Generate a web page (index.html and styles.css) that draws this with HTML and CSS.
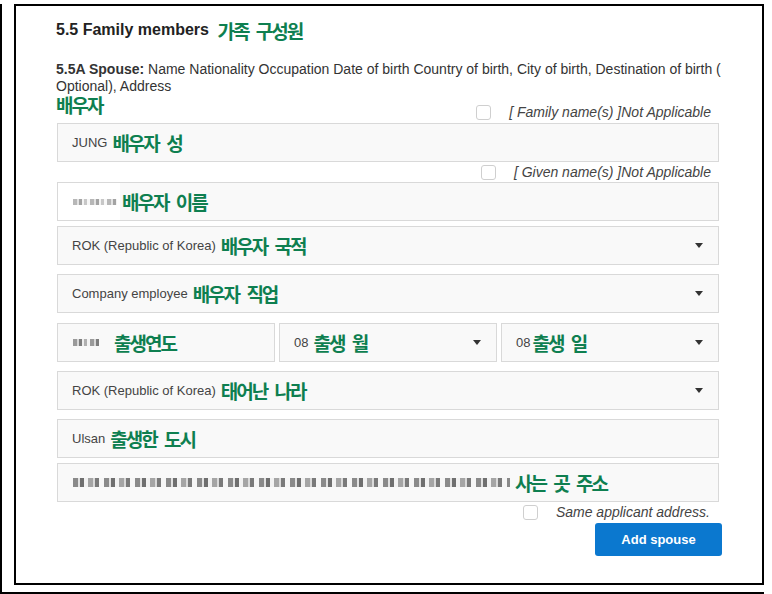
FILE: index.html
```html
<!DOCTYPE html>
<html lang="ko">
<head>
<meta charset="utf-8">
<title>5.5 Family members</title>
<link rel="stylesheet" href="styles.css">
</head>
<body>
<div class="outer">
  <div class="frame">
    <h2 class="title">5.5 Family members <span class="ko">가족 구성원</span></h2>
    <p class="desc"><b>5.5A Spouse:</b> Name Nationality Occupation Date of birth Country of birth, City of birth, Destination of birth ( Optional), Address</p>

    <div class="label-row">
      <span class="ko">배우자</span>
      <label class="check"><span class="box"></span><span>[ Family name(s) ]Not Applicable</span></label>
    </div>

    <div class="field gap-3"><span>JUNG</span><span class="ko">배우자 성</span></div>

    <div class="check-row gap-3">
      <label class="check"><span class="box"></span><span>[ Given name(s) ]Not Applicable</span></label>
    </div>

    <div class="field gap-2 masked"><span class="blur blur-name"></span><span class="ko">배우자 이름</span></div>

    <div class="field select gap-5"><span>ROK (Republic of Korea)</span><span class="ko">배우자 국적</span><span class="caret"></span></div>

    <div class="field select gap-9"><span>Company employee</span><span class="ko">배우자 직업</span><span class="caret"></span></div>

    <div class="date-row gap-10">
      <div class="field"><span class="blur blur-year"></span><span class="ko ko-year">출생연도</span></div>
      <div class="field select"><span>08</span><span class="ko">출생 월</span><span class="caret"></span></div>
      <div class="field select"><span>08</span><span class="ko ko-tight">출생 일</span><span class="caret"></span></div>
    </div>

    <div class="field select gap-9"><span>ROK (Republic of Korea)</span><span class="ko">태어난 나라</span><span class="caret"></span></div>

    <div class="field gap-9"><span>Ulsan</span><span class="ko">출생한 도시</span></div>

    <div class="field gap-5"><span class="blur blur-addr"></span><span class="ko">사는 곳 주소</span></div>

    <div class="check-row gap-3 check-row-addr">
      <label class="check"><span class="box"></span><span>Same applicant address.</span></label>
    </div>

    <div class="button-row">
      <button class="btn" type="button">Add spouse</button>
    </div>
  </div>
</div>
</body>
</html>
```

FILE: styles.css
```css
html, body {
  margin: 0;
  padding: 0;
  background: #fff;
}

body {
  width: 772px;
  height: 594px;
  overflow: hidden;
  font-family: "Liberation Sans", Arial, "Noto Sans CJK KR", sans-serif;
  color: #333;
}

.outer {
  box-sizing: border-box;
  margin-top: 4px;
  width: 764px;
  height: 590px;
  border-left: 2px solid #000;
  border-bottom: 2px solid #000;
}

.frame {
  box-sizing: border-box;
  margin-left: 12px;
  width: 750px;
  height: 581px;
  border: 2px solid #000;
  padding: 14px 0 0 40px;
}

.ko {
  font-family: "Noto Sans CJK KR", sans-serif;
  font-weight: 700;
  font-size: 19px;
  letter-spacing: -2px;
  word-spacing: 4px;
  color: #0e7f50;
  line-height: 1;
}

.title {
  margin: 0;
  font-size: 16px;
  font-weight: 700;
  color: #222;
  line-height: 20px;
  height: 20px;
  display: flex;
  align-items: center;
  gap: 4px;
  white-space: pre;
}

.desc {
  margin: 21px 0 0 0;
  width: 668px;
  font-size: 14px;
  line-height: 17px;
  color: #333;
}

.desc b {
  color: #333;
}

.label-row {
  width: 663px;
  height: 25px;
  display: flex;
  justify-content: space-between;
}

.label-row .ko {
  align-self: flex-start;
  line-height: 18px;
  margin-top: 1px;
}

.label-row .check {
  align-self: flex-end;
}

.check-row {
  width: 663px;
  display: flex;
  justify-content: flex-end;
}

.check-row-addr {
  width: 662px;
}

.check {
  display: flex;
  align-items: center;
  gap: 18px;
  padding-right: 8px;
  font-size: 14px;
  font-style: italic;
  color: #444;
  line-height: 15px;
}

.box {
  box-sizing: border-box;
  width: 15px;
  height: 15px;
  border: 1px solid #cfcfcf;
  border-radius: 3px;
  background: #fff;
}

.field {
  box-sizing: border-box;
  margin-left: 1px;
  width: 662px;
  height: 39px;
  border: 1px solid #d9d9d9;
  background: #f9f9f9;
  display: flex;
  align-items: center;
  gap: 5px;
  padding: 0 15px 0 14px;
  font-size: 13px;
  color: #444;
}

.select .caret {
  margin-left: auto;
  width: 0;
  height: 0;
  border-left: 4px solid transparent;
  border-right: 4px solid transparent;
  border-top: 5px solid #333;
}

.gap-2 { margin-top: 2px; }
.gap-3 { margin-top: 3px; }
.gap-5 { margin-top: 5px; }
.gap-9 { margin-top: 9px; }
.gap-10 { margin-top: 10px; }

.date-row {
  margin-left: 1px;
  width: 662px;
  display: grid;
  grid-template-columns: 218px 218px 218px;
  column-gap: 4px;
}

.date-row .field {
  margin-left: 0;
  width: auto;
}

.ko-year {
  margin-left: 10px;
}

.ko-tight {
  margin-left: -3px;
}

.blur {
  display: inline-block;
  height: 7px;
  filter: blur(0.7px);
  background: repeating-linear-gradient(90deg, #9a9a9a 0 4px, #d8d8d8 4px 6px, #7d7d7d 6px 9px, #eeeeee 9px 11px, #b0b0b0 11px 14px, #f4f4f4 14px 17px);
}

.blur-name {
  width: 44px;
  margin-left: 1px;
  height: 6px;
  opacity: 0.7;
}

.masked {
  background: linear-gradient(90deg, #fff 0 62px, #f9f9f9 62px);
}

.blur-year {
  width: 26px;
  margin-left: 1px;
}

.blur-addr {
  width: 437px;
  margin-left: 1px;
  height: 9px;
  background: repeating-linear-gradient(90deg, #8a8a8a 0 5px, #e2e2e2 5px 7px, #6f6f6f 7px 11px, #f2f2f2 11px 15px, #a5a5a5 15px 20px, #dadada 20px 22px, #7a7a7a 22px 26px, #f6f6f6 26px 31px);
}

.button-row {
  width: 666px;
  margin-top: 3px;
  display: flex;
  justify-content: flex-end;
}

.btn {
  width: 127px;
  height: 33px;
  border: 0;
  border-radius: 3px;
  background: #0b78cf;
  color: #fff;
  font-family: "Liberation Sans", Arial, sans-serif;
  font-size: 13px;
  font-weight: 700;
  padding: 0;
}
```
